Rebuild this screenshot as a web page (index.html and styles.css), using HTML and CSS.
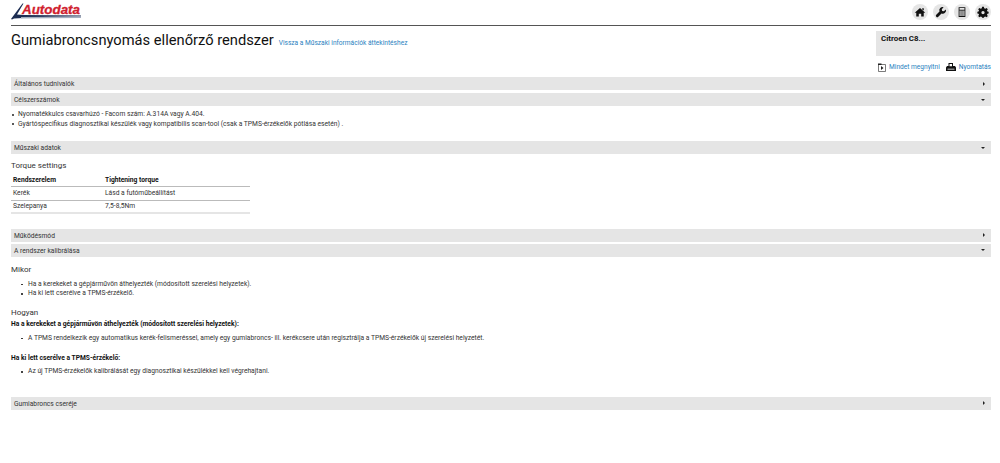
FILE: index.html
```html
<!DOCTYPE html>
<html lang="hu">
<head>
<meta charset="utf-8">
<title>Gumiabroncsnyomás ellenőrző rendszer</title>
<link rel="stylesheet" href="styles.css">
</head>
<body>
<header class="topbar">
  <a class="logo" href="#">
    <svg class="logo-mark" width="70" height="20" viewBox="0 0 70 20">
      <path d="M0 19 L11.5 3.5 L12.5 3.5 L6 14.5 L12 15 L70 15.5 L70 16.5 L30 17 L3 18.5 L1 19.5 Z" fill="#1c2d52"/>
      <path d="M10 17 L70 16.5 L70 18 L10 18.5 Z" fill="#a4aebf"/>
    </svg>
    <span class="logo-text">Autodata</span>
  </a>
  <nav class="tools">
    <span class="tool"><svg viewBox="0 0 16 16"><path d="M8 2.5 L15 9 L13 9 L13 14 L9.6 14 L9.6 10.2 L6.4 10.2 L6.4 14 L3 14 L3 9 L1 9 Z M11 3 L13 3 L13 6 L11 4.5 Z" fill="#111"/></svg></span>
    <span class="tool"><svg viewBox="0 0 16 16"><path d="M14.5 4.5 L11.7 7 L9.6 6.5 L9 4.4 L11.5 1.6 A4.4 4.4 0 0 0 6 7.3 L1.7 11.6 A1.9 1.9 0 0 0 4.4 14.3 L8.7 10 A4.4 4.4 0 0 0 14.5 4.5 Z" fill="#111"/></svg></span>
    <span class="tool"><svg viewBox="0 0 16 16"><path d="M3.5 1.5 H12.5 V14.5 H3.5 Z M4.7 2.7 V5 H11.3 V2.7 Z M4.7 6 V13.3 H6.2 V6 Z M7.2 6 V13.3 H8.8 V6 Z M9.8 6 V13.3 H11.3 V6 Z" fill="#111" fill-rule="evenodd"/></svg></span>
    <span class="tool"><svg viewBox="0 0 16 16"><path d="M6.8 1 H9.2 L9.6 3 L11 3.6 L12.8 2.5 L14.4 4.2 L13.3 5.9 L13.9 7.2 L15.5 7.6 V9.9 L13.9 10.3 L13.3 11.6 L14.4 13.3 L12.8 14.9 L11 13.9 L9.6 14.5 L9.2 15.5 H6.8 L6.4 14.5 L5 13.9 L3.2 14.9 L1.6 13.3 L2.7 11.6 L2.1 10.3 L0.5 9.9 V7.6 L2.1 7.2 L2.7 5.9 L1.6 4.2 L3.2 2.5 L5 3.6 L6.4 3 Z M8 6.5 A2.2 2.2 0 1 0 8 10.9 A2.2 2.2 0 1 0 8 6.5 Z" fill="#111" fill-rule="evenodd"/></svg></span>
  </nav>
</header>

<section class="heading">
  <div class="title-wrap">
    <h1>Gumiabroncsnyomás ellenőrző rendszer</h1>
    <a class="link back" href="#">Vissza a Műszaki információk áttekintéshez</a>
  </div>
  <div class="side">
    <div class="vehicle">Citroen C8...</div>
    <div class="actions">
      <a class="link action" href="#"><svg width="8" height="9" viewBox="0 0 8 9"><path d="M0.5 1.5 H7.5 V8.5 H0.5 Z" fill="none" stroke="#444" stroke-width="0.7"/><path d="M3 3 L5.5 5 L3 7 Z M0 0.5 H3.5 V2 H0 Z" fill="#222"/></svg>Mindet megnyitni</a>
      <a class="link action" href="#"><svg width="10" height="8" viewBox="0 0 10 8"><path d="M2.5 0 H7 V3 H9 L10 4.5 V8 H0 V4.5 L1 3 H2.5 Z" fill="#111"/><path d="M3.5 1 H6 V3.2 H3.5 Z M1.5 5.7 H8.5 V6.5 H1.5 Z" fill="#fff"/></svg>Nyomtatás</a>
    </div>
  </div>
</section>

<main>
  <div class="bar closed mt-a"><span>Általános tudnivalók</span></div>
  <div class="bar open"><span>Célszerszámok</span></div>
  <ul class="tight-list">
    <li>Nyomatékkulcs csavarhúzó - Facom szám: A.314A vagy A.404.</li>
    <li>Gyártóspecifikus diagnosztikai készülék vagy kompatibilis scan-tool (csak a TPMS-érzékelők pótlása esetén) .</li>
  </ul>
  <div class="bar open mt-b"><span>Műszaki adatok</span></div>
  <h2 class="torque">Torque settings</h2>
  <table class="specs">
    <thead><tr><th>Rendszerelem</th><th>Tightening torque</th></tr></thead>
    <tbody>
      <tr><td>Kerék</td><td>Lásd a futóműbeállítást</td></tr>
      <tr><td>Szelepanya</td><td>7,5-8,5Nm</td></tr>
    </tbody>
  </table>
  <div class="bar closed mt-c"><span>Működésmód</span></div>
  <div class="bar open mt-e"><span>A rendszer kalibrálása</span></div>
  <h2 class="sub-a">Mikor</h2>
  <ul class="indent first">
    <li>Ha a kerekeket a gépjárművön áthelyezték (módosított szerelési helyzetek).</li>
    <li>Ha ki lett cserélve a TPMS-érzékelő.</li>
  </ul>
  <h2 class="sub-b">Hogyan</h2>
  <p class="strong">Ha a kerekeket a gépjárművön áthelyezték (módosított szerelési helyzetek):</p>
  <ul class="indent">
    <li>A TPMS rendelkezik egy automatikus kerék-felismeréssel, amely egy gumiabroncs- ill. kerékcsere után regisztrálja a TPMS-érzékelők új szerelési helyzetét.</li>
  </ul>
  <p class="strong second">Ha ki lett cserélve a TPMS-érzékelő:</p>
  <ul class="indent">
    <li>Az új TPMS-érzékelők kalibrálását egy diagnosztikai készülékkel kell végrehajtani.</li>
  </ul>
  <div class="bar closed mt-d"><span>Gumiabroncs cseréje</span></div>
</main>
</body>
</html>
```
FILE: styles.css
```css
* { box-sizing: border-box; }
html, body { margin: 0; padding: 0; background: #fff; }
body {
  font-family: Roboto, "Liberation Sans", sans-serif;
  font-size: 6.7px;
  color: #222;
  padding: 0 9px 0 11px;
  height: 463px;
  overflow: hidden;
}
a { text-decoration: none; }
.link { color: #2a7fc0; white-space: nowrap; }
.topbar {
  display: flex;
  justify-content: space-between;
  height: 26px;
  border-bottom: 1px solid #555;
}
.logo { position: relative; display: block; width: 70px; height: 20px; margin-top: 0; }
.logo-mark { position: absolute; left: 0; top: 0; }
.logo-text {
  position: absolute; left: 11px; top: 3px;
  font: italic 700 13.4px/14px "Liberation Sans", sans-serif;
  color: #d0202e;
  -webkit-text-stroke: 0.3px #d0202e;
}
.tools { display: flex; gap: 5px; padding-top: 4px; }
.tool {
  width: 16px; height: 16px; border-radius: 50%;
  background: #e5e5e5;
  display: flex; align-items: center; justify-content: center;
}
.tool svg { width: 12px; height: 12px; }
.heading { display: flex; justify-content: space-between; height: 51px; }
.title-wrap { display: flex; align-items: baseline; gap: 5px; padding-top: 5px; }
h1 { margin: 0; font-size: 14.7px; line-height: 19px; font-weight: 400; color: #111; }
.back { font-size: 6.6px; }
.side { width: 115px; padding-top: 5px; }
.vehicle {
  height: 25px; background: #e5e5e5;
  padding: 3px 5px;
  font-weight: 700; font-size: 7.9px; line-height: 10px; color: #111;
}
.actions { display: flex; justify-content: flex-end; gap: 6px; margin-top: 6.5px; }
.action { display: flex; align-items: center; gap: 3px; font-size: 6.6px; line-height: 9px; }
.action svg { flex: none; }
.bar {
  position: relative;
  height: 13px;
  background: #e5e5e5;
  padding-left: 3px;
  line-height: 14px;
  color: #333;
  margin-top: 3px;
}
.bar::after { content: ""; position: absolute; width: 0; height: 0; }
.closed::after { right: 6px; top: 4.5px; border-left: 2.5px solid #222; border-top: 2px solid transparent; border-bottom: 2px solid transparent; }
.open::after { right: 6px; top: 5.5px; border-top: 2.5px solid #222; border-left: 2.5px solid transparent; border-right: 2.5px solid transparent; }
.mt-a { margin-top: 0; }
ul { margin: 0; padding: 0; list-style: none; }
li { position: relative; line-height: 9.5px; color: #333; }
li::before { content: ""; position: absolute; width: 2px; height: 2px; border-radius: 50%; background: #222; }
.tight-list { padding: 4px 0 0 7px; }
.tight-list li::before { left: -6px; top: 3.5px; }
.mt-b { margin-top: 12px; }
h2 { margin: 0; font-size: 8px; font-weight: 400; line-height: 11px; color: #333; }
.torque { margin-top: 5.5px; }
.specs { width: 239px; margin-top: 3px; border-collapse: collapse; border-bottom: 2px solid #e5e5e5; table-layout: fixed; }
.specs th, .specs td { text-align: left; padding: 0 0 0 2px; height: 13.3px; color: #333; border-bottom: 1px solid #bbb; }
.specs th { font-weight: 700; color: #111; }
.specs th:first-child { width: 93px; }
.specs th + th, .specs td + td { padding-left: 1px; }
.mt-c { margin-top: 14.5px; }
.mt-e { margin-top: 2px; }
.sub-a { margin-top: 7px; }
.indent { padding-left: 17px; }
.indent li::before { left: -7px; top: 4px; width: 1.5px; height: 1.5px; }
.first { margin-top: 5px; }
.sub-b { margin-top: 8px; }
.strong { margin: 1px 0 0; font-weight: 700; color: #111; line-height: 10px; }
.strong + .indent { margin-top: 5px; }
.second + .indent { margin-top: 4px; }
.second { margin-top: 10px; }
.mt-d { margin-top: 20px; }
```
